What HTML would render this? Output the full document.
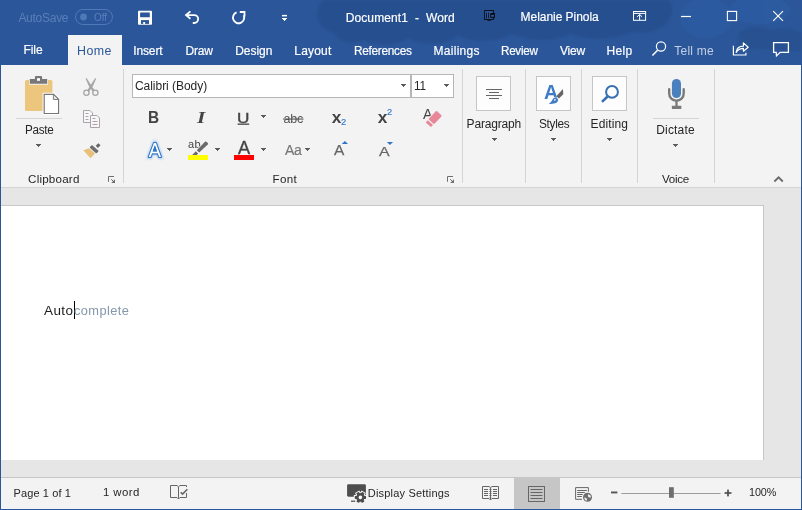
<!DOCTYPE html>
<html lang="en"><head><meta charset="utf-8"><title>Document1 - Word</title>
<style>
html,body{margin:0;padding:0}
body{width:802px;height:510px;overflow:hidden;position:relative;background:#2b579a;font-family:"Liberation Sans",sans-serif;font-size:12px}
#win{position:absolute;left:0;top:0;width:802px;height:510px;overflow:hidden}
.abs{position:absolute}
#titlebar{position:absolute;left:0;top:0;width:802px;height:65px;background:#2b579a;overflow:hidden}
#hometab{position:absolute;left:68px;top:35px;width:54px;height:31px;background:#f3f3f3}
#ribbon{position:absolute;left:1px;top:65px;width:800px;height:122px;background:#f3f3f3;border-bottom:1px solid #d4d4d4}
#docarea{position:absolute;left:1px;top:188px;width:800px;height:289px;background:#e6e6e6}
#page{position:absolute;left:0;top:17px;width:762px;height:254px;background:#fff;border-top:1px solid #c8c8c8;border-right:1px solid #c6c6c6}
#status{position:absolute;left:1px;top:477px;width:800px;height:31px;background:#f3f3f3;border-top:1px solid #c6c6c6}
.sep{position:absolute;top:4px;width:1px;height:114px;background:#d4d4d4}
.hline{position:absolute;height:1px;background:#d4d4d4}
.box{position:absolute;box-sizing:border-box;border:1px solid #c6c6c6;background:#fdfdfd}
.input{position:absolute;box-sizing:border-box;border:1px solid #b6b6b6;background:#fff}
.t{position:absolute;transform-origin:0 0;line-height:1;white-space:pre;margin:0;padding:0}
svg{position:absolute;overflow:visible}
.arr{position:absolute;width:5px;height:1px;background:#5c5c5c}
.arr::before{content:"";position:absolute;left:1px;top:1px;width:3px;height:1px;background:inherit}
.arr::after{content:"";position:absolute;left:2px;top:2px;width:1px;height:1px;background:inherit}
#labels{will-change:transform;position:absolute;left:0;top:0;width:802px;height:510px;pointer-events:none}

</style></head>
<body>
<div id="win">
<div id="titlebar">
  <svg width="802" height="65" style="left:0;top:0" viewBox="0 0 802 65">
    <defs><filter id="soft" x="-5%" y="-20%" width="110%" height="140%"><feGaussianBlur stdDeviation="1.2"/></filter></defs>
    <g fill="#27508f" filter="url(#soft)">
      <path d="M322 0C312 14 318 30 334 33C338 42 352 46 364 40C376 48 398 46 408 38C420 46 446 46 458 36C474 44 500 42 512 34C530 42 556 42 570 34C590 42 618 40 632 32C650 36 668 28 672 14C674 8 672 3 668 0Z"/>
      <path d="M738 34C744 26 760 24 770 30C782 26 796 28 802 34V52C780 50 756 48 738 50Z" opacity="0.8"/>
    </g>
    <g fill="#2e5da5" opacity="0.6">
      <ellipse cx="706" cy="18" rx="26" ry="20"/>
      <ellipse cx="760" cy="10" rx="30" ry="14"/>
    </g>
  </svg>
</div>
<div id="hometab"></div>
<div id="ribbon">
  <div class="hline" style="left:15px;top:53px;width:46px"></div>
  <div class="sep" style="left:122px"></div>
  <div class="input" style="left:131px;top:9px;width:279px;height:23.5px"></div>
  <div class="input" style="left:410px;top:9px;width:43px;height:23.5px"></div>
  <div class="sep" style="left:461px"></div>
  <div class="box" style="left:475px;top:11px;width:35px;height:35px"></div>
  <div class="sep" style="left:524px"></div>
  <div class="box" style="left:535px;top:11px;width:35px;height:35px"></div>
  <div class="sep" style="left:580px"></div>
  <div class="box" style="left:591px;top:11px;width:35px;height:35px"></div>
  <div class="sep" style="left:636px"></div>
  <div class="hline" style="left:652px;top:53px;width:46px"></div>
  <div class="sep" style="left:713px"></div>
</div>
<div id="docarea">
  <div id="page"></div>
  <div class="abs" style="left:72.5px;top:113px;width:1px;height:17.5px;background:#000"></div>
</div>
<div id="status">
  <div class="abs" style="left:513px;top:0;width:46px;height:31px;background:#c6c6c6"></div>
</div>

<div id="labels">
<span class="t" id="t-autosave" style="left:18.40px;top:12.00px;font-size:12px;color:#5a7fb8;letter-spacing:-0.271px;">AutoSave</span>
<span class="t" id="t-off" style="left:94.10px;top:13.00px;font-size:10px;color:#5a7fb8;letter-spacing:-0.112px;">Off</span>
<span class="t" id="t-title" style="left:345.70px;top:12.00px;font-size:12px;color:#fff;letter-spacing:0.113px;-webkit-text-stroke:0.18px #fff;">Document1&nbsp; -&nbsp; Word</span>
<span class="t" id="t-user" style="left:520.60px;top:11.00px;font-size:12px;color:#fff;letter-spacing:-0.042px;-webkit-text-stroke:0.18px #fff;">Melanie Pinola</span>
<span class="t" id="t-file" style="left:23.60px;top:44.00px;font-size:12px;color:#fff;letter-spacing:-0.117px;-webkit-text-stroke:0.18px #fff;">File</span>
<span class="t" id="t-home" style="left:77.17px;top:45.00px;font-size:12px;color:#2b579a;letter-spacing:0.400px;transform:scaleX(1.035);">Home</span>
<span class="t" id="t-insert" style="left:133.28px;top:45.00px;font-size:12px;color:#fff;letter-spacing:-0.135px;-webkit-text-stroke:0.18px #fff;">Insert</span>
<span class="t" id="t-draw" style="left:185.40px;top:45.00px;font-size:12px;color:#fff;letter-spacing:-0.167px;-webkit-text-stroke:0.18px #fff;">Draw</span>
<span class="t" id="t-design" style="left:235.20px;top:45.00px;font-size:12px;color:#fff;letter-spacing:-0.025px;-webkit-text-stroke:0.18px #fff;">Design</span>
<span class="t" id="t-layout" style="left:294.30px;top:45.00px;font-size:12px;color:#fff;letter-spacing:0.180px;-webkit-text-stroke:0.18px #fff;">Layout</span>
<span class="t" id="t-refs" style="left:353.51px;top:45.00px;font-size:12px;color:#fff;letter-spacing:-0.300px;transform:scaleX(0.986);-webkit-text-stroke:0.18px #fff;">References</span>
<span class="t" id="t-mail" style="left:433.40px;top:45.00px;font-size:12px;color:#fff;letter-spacing:0.311px;-webkit-text-stroke:0.18px #fff;">Mailings</span>
<span class="t" id="t-review" style="left:500.73px;top:45.00px;font-size:12px;color:#fff;letter-spacing:-0.300px;transform:scaleX(0.974);-webkit-text-stroke:0.18px #fff;">Review</span>
<span class="t" id="t-view" style="left:559.88px;top:45.00px;font-size:12px;color:#fff;letter-spacing:-0.183px;-webkit-text-stroke:0.18px #fff;">View</span>
<span class="t" id="t-help" style="left:606.40px;top:45.00px;font-size:12px;color:#fff;letter-spacing:0.400px;-webkit-text-stroke:0.18px #fff;">Help</span>
<span class="t" id="t-tellme" style="left:674.35px;top:45.00px;font-size:12px;color:#c2d0e7;letter-spacing:0.225px;">Tell me</span>
<span class="t" id="t-paste" style="left:24.73px;top:124.00px;font-size:12px;color:#262626;letter-spacing:-0.300px;transform:scaleX(0.974);">Paste</span>
<span class="t" id="t-clipboard" style="left:28.07px;top:173.00px;font-size:11.6px;color:#262626;letter-spacing:0.206px;">Clipboard</span>
<span class="t" id="t-calibri" style="left:134.97px;top:80.00px;font-size:12px;color:#262626;letter-spacing:-0.037px;">Calibri (Body)</span>
<span class="t" id="t-eleven" style="left:414.14px;top:80.00px;font-size:12px;color:#262626;letter-spacing:-0.300px;transform:scaleX(0.981);">11</span>
<span class="t" id="t-font" style="left:272.60px;top:173.00px;font-size:11.6px;color:#262626;letter-spacing:0.325px;">Font</span>
<span class="t" id="t-paragraph" style="left:466.60px;top:118.00px;font-size:12px;color:#262626;letter-spacing:-0.181px;">Paragraph</span>
<span class="t" id="t-styles" style="left:538.71px;top:118.00px;font-size:12px;color:#262626;letter-spacing:-0.300px;transform:scaleX(0.985);">Styles</span>
<span class="t" id="t-editing" style="left:590.60px;top:118.00px;font-size:12px;color:#262626;letter-spacing:0.117px;">Editing</span>
<span class="t" id="t-dictate" style="left:656.20px;top:124.00px;font-size:12px;color:#262626;letter-spacing:0.188px;">Dictate</span>
<span class="t" id="t-voice" style="left:661.98px;top:173.00px;font-size:11.6px;color:#262626;letter-spacing:-0.263px;">Voice</span>
<span class="t" id="t-auto" style="left:44.10px;top:305.00px;font-size:12.6px;color:#1a1a1a;letter-spacing:0.400px;transform:scaleX(1.069);">Auto</span>
<span class="t" id="t-complete" style="left:74.09px;top:305.00px;font-size:12.6px;color:#8497ab;letter-spacing:0.400px;transform:scaleX(1.018);">complete</span>
<span class="t" id="t-page" style="left:13.62px;top:488.00px;font-size:11px;color:#262626;letter-spacing:0.092px;">Page 1 of 1</span>
<span class="t" id="t-word" style="left:102.79px;top:487.00px;font-size:11px;color:#262626;letter-spacing:0.400px;transform:scaleX(1.036);">1 word</span>
<span class="t" id="t-display" style="left:367.82px;top:488.00px;font-size:11px;color:#262626;letter-spacing:0.192px;">Display Settings</span>
<span class="t" id="t-zoom" style="left:749.05px;top:487.00px;font-size:10.8px;color:#262626;letter-spacing:-0.100px;">100%</span>
<span class="t" id="t-B" style="left:148.33px;top:109.00px;font-size:16.2px;color:#444;transform:scaleX(0.952);font-weight:700;">B</span>
<span class="t" id="t-I" style="left:197.06px;top:110.00px;font-size:16.5px;color:#444;transform:scaleX(1.300);font-family:'Liberation Serif', serif;font-weight:700;font-style:italic;">I</span>
<span class="t" id="t-U" style="left:237.33px;top:110.00px;font-size:15.2px;color:#444;transform:scaleX(1.131);-webkit-text-stroke:0.4px #444;">U</span>
<span class="t" id="t-abc" style="left:283.50px;top:113.00px;font-size:12.5px;color:#555;letter-spacing:-0.188px;">abc</span>
<span class="t" id="t-xsub" style="left:331.78px;top:109.00px;font-size:17.3px;color:#444;font-weight:700;">x</span>
<span class="t" id="t-sub2" style="left:341.47px;top:119.00px;font-size:8.2px;color:#2e75c8;transform:scaleX(1.147);-webkit-text-stroke:0.12px #2e75c8;">2</span>
<span class="t" id="t-xsup" style="left:377.78px;top:109.00px;font-size:17.3px;color:#444;font-weight:700;">x</span>
<span class="t" id="t-sup2" style="left:387.27px;top:109.00px;font-size:8.2px;color:#2e75c8;transform:scaleX(1.147);-webkit-text-stroke:0.12px #2e75c8;">2</span>
<span class="t" id="t-clrA" style="left:423.28px;top:107.00px;font-size:14.6px;color:#444;transform:scaleX(0.968);">A</span>
<span class="t" id="t-hlab" style="left:188.39px;top:139.00px;font-size:10.8px;color:#444;letter-spacing:0.400px;transform:scaleX(1.026);">ab</span>
<span class="t" id="t-fcA" style="left:237.80px;top:140.00px;font-size:17.9px;color:#444;transform:scaleX(1.019);-webkit-text-stroke:0.35px #444;">A</span>
<span class="t" id="t-Aa" style="left:284.58px;top:143.00px;font-size:14.7px;color:#777;letter-spacing:-0.300px;transform:scaleX(0.956);-webkit-text-stroke:0.2px #777;">Aa</span>
<span class="t" id="t-growA" style="left:334.20px;top:143.00px;font-size:14.2px;color:#666;transform:scaleX(1.088);-webkit-text-stroke:0.25px #666;">A</span>
<span class="t" id="t-shrinkA" style="left:379.10px;top:145.00px;font-size:13.6px;color:#666;transform:scaleX(1.167);-webkit-text-stroke:0.25px #666;">A</span>
<span class="t" id="t-stylesA" style="left:543.62px;top:82.00px;font-size:20.3px;color:#3e7bc4;transform:scaleX(0.961);font-weight:700;">A</span>
</div>
<!-- all icons, absolute window coordinates -->
<svg id="icons" width="802" height="510" viewBox="0 0 802 510" style="left:0;top:0">
  <defs>
    <g id="arr"><path d="M0 0h5v1h-1v1h-1v1h-1v-1h-1v-1h-1z" shape-rendering="crispEdges"/></g>
    <filter id="glow" x="-40%" y="-40%" width="180%" height="180%"><feGaussianBlur stdDeviation="0.9"/></filter>
    <g id="launcher"><path d="M0.5 5.8V0.5H6" fill="none" stroke="#6e6e6e" stroke-width="1"/><path d="M7 3.2V7H3.2Z" fill="#6e6e6e"/><path d="M3.2 3.2L6 6" stroke="#6e6e6e" stroke-width="1" fill="none"/></g>
  </defs>

  <!-- TITLE BAR -->
  <rect x="75.5" y="9.5" width="37" height="15" rx="7.5" fill="none" stroke="#4f78b6"/>
  <circle cx="83.5" cy="17" r="3.4" fill="#4f78b6"/>
  <!-- save -->
  <g><rect x="138" y="10.8" width="14" height="14" rx="0.8" fill="#fffdf8"/><rect x="140.1" y="12.4" width="9.7" height="4.9" rx="0.6" fill="#2b579a"/><rect x="141" y="20.1" width="8" height="3.8" fill="#2b579a"/><rect x="143.2" y="22" width="1.9" height="2" fill="#fffdf8"/></g>
  <!-- undo -->
  <g fill="none" stroke="#fff" stroke-width="1.8"><path d="M190.4 11.4L186 15.1L190.4 18.8"/><path d="M186.4 15.1H194.2A3.95 3.95 0 0 1 194.2 23H192.8"/></g>
  <!-- repeat -->
  <g fill="none" stroke="#fff" stroke-width="1.8"><path d="M236.6 12.4A5.6 5.6 0 1 0 243.7 15.4"/><path d="M239.8 12H244.5V16.6"/></g>
  <!-- customize qat -->
  <rect x="282" y="14.9" width="5" height="1.5" fill="#fff"/>
  <use href="#arr" x="282" y="18" fill="#fff"/>
  <!-- dark monitor -->
  <g><rect x="484.6" y="10.6" width="8.8" height="8.8" fill="#2d5ba2" stroke="#0a0e18" stroke-width="1"/><path d="M486.5 12.7v5.5M488.6 12.7v5.5" stroke="#0a0e18" stroke-width="0.9"/><rect x="490.2" y="13" width="4.8" height="4.9" fill="#0a0e18"/><rect x="491.2" y="14.9" width="2.7" height="1.8" fill="#2d5ba2"/><rect x="487.3" y="19.8" width="3.6" height="0.9" fill="#0a0e18"/></g>
  <!-- ribbon display -->
  <g fill="none" stroke="#fff" stroke-width="1"><rect x="633.5" y="11.5" width="12.1" height="8.8"/><path d="M633.5 13.4h12"/><path d="M639.6 20V14.8M637.1 16.8L639.6 14.4L642.1 16.8"/></g>
  <rect x="681" y="15.9" width="10" height="1.2" fill="#fff"/>
  <rect x="727.4" y="11.4" width="9.2" height="9.2" fill="none" stroke="#fff" stroke-width="1.1"/>
  <path d="M773.2 11.1L783 20.9M783 11.1L773.2 20.9" stroke="#fff" stroke-width="1.1"/>
  <!-- TAB ROW -->
  <circle cx="661" cy="46.5" r="4.6" fill="none" stroke="#fff" stroke-width="1.2"/><path d="M657.6 50.2L652.4 55.6" stroke="#fff" stroke-width="1.5"/>
  <g fill="none" stroke="#fff" stroke-width="1.2"><path d="M733.4 45.8V55H745.9V52.8"/><path d="M736.2 52.4C736.6 48.4 739.6 46.2 743.4 46.2V42.9L748.2 47.2L743.4 51.2V48.4C740.4 48.4 738 49.6 736.2 52.4Z" stroke-linejoin="round"/></g>
  <path d="M773.6 42.7H788.4V52.4H780.2L776.5 55.9L776.2 52.4H773.6Z" fill="none" stroke="#fff" stroke-width="1.3"/>

  <!-- CLIPBOARD -->
  <rect x="25" y="80" width="27.4" height="31" rx="1.6" fill="#ecc67c"/>
  <path d="M29 84.8V78.2H34V76.6Q34 75.2 35.4 75.2H41.6Q43 75.2 43 76.6V78.2H48V84.8Z" fill="#f3f3f3"/>
  <path d="M29.8 83.8V79H34.9V77.2Q34.9 76.1 36 76.1H41Q42.1 76.1 42.1 77.2V79H47.2V83.8Z" fill="#787878"/>
  <rect x="37" y="78.2" width="3" height="2.6" fill="#fff"/>
  <path d="M42.6 92.7H54.2L60.2 98.7V115.1H42.6Z" fill="#fff"/>
  <path d="M44.2 94.3H53.6L58.6 99.3V113.5H44.2Z" fill="#fff" stroke="#777" stroke-width="1.2"/>
  <path d="M53.4 94.4V99.5H58.5Z" fill="#e4e4e4" stroke="#777" stroke-width="0.9"/>
  <use href="#arr" x="36" y="144" fill="#5c5c5c"/>
  <!-- scissors -->
  <g fill="#a6a6a6"><path d="M85.5 78.3L86.7 78.3L94.5 90.2L92.6 91.4L88.6 85.6Z"/><path d="M96.3 78.3L95.1 78.3L87.3 90.2L89.2 91.4L93.2 85.6Z"/></g>
  <g fill="none" stroke="#a6a6a6" stroke-width="1.3"><circle cx="86.4" cy="92.7" r="2.6"/><circle cx="95.4" cy="92.7" r="2.6"/></g>
  <!-- copy -->
  <g fill="#f7f7f7" stroke="#aaa4aa" stroke-width="1"><path d="M83.5 110.5H90L92.5 113V122.5H83.5Z"/><path d="M90.5 115.5H97L99.5 118V127.5H90.5Z"/></g>
  <g stroke="#aaa4aa" stroke-width="1"><path d="M85.5 113.5h3M85.5 116.5h3M85.5 119.5h3M92.5 118.5h3M92.5 121.5h5M92.5 124.5h5"/></g>
  <!-- format painter -->
  <path d="M98.4 143.2L100.5 145.3L97.9 147.9L95.7 145.8Z" fill="#666"/>
  <path d="M91.4 145.4Q92 144.9 92.6 145.4L98.2 150.6Q98.7 151.2 98.2 151.8L96.8 153.1Q96.2 153.5 95.7 153L90.1 147.9Q89.6 147.3 90.1 146.7Z" fill="#6e6e6e"/>
  <path d="M89 148.2L95 153.4L90.4 158.3L83.4 150.3Z" fill="#e8c07a"/>
  <use href="#launcher" x="108" y="176"/>

  <!-- FONT -->
  <use href="#arr" x="401" y="84" fill="#5c5c5c"/>
  <use href="#arr" x="444" y="84" fill="#5c5c5c"/>
  <rect x="237.6" y="123.5" width="11.6" height="1.3" fill="#444"/>
  <use href="#arr" x="261" y="115" fill="#5c5c5c"/>
  <rect x="283.1" y="118.5" width="20.4" height="1.1" fill="#555"/>
  <!-- clear formatting eraser -->
  <g><path d="M435.6 111.4Q436.5 110.6 437.4 111.4L441.2 114.9Q442 115.8 441.2 116.7L434.8 123.5Q434 124.3 433.1 123.5L429.3 120Q428.5 119.2 429.3 118.3Z" fill="#f3f3f3" stroke="#f3f3f3" stroke-width="2"/><path d="M435.6 111.4Q436.5 110.6 437.4 111.4L441.2 114.9Q442 115.8 441.2 116.7L434.8 123.5Q434 124.3 433.1 123.5L429.3 120Q428.5 119.2 429.3 118.3Z" fill="#e8879a"/><path d="M427.8 120.2L433 124.9L431.6 126.5Q431 127.1 430.3 126.5L426.3 122.9Q425.7 122.3 426.3 121.7Z" fill="#e8879a"/></g>
  <!-- text effects A -->
  <g transform="translate(148.7,157) scale(0.93,0.985)" font-family="'Liberation Sans',sans-serif" font-size="19.8">
    <text x="0" y="0" fill="#a5c9f1" stroke="#a5c9f1" stroke-width="3.6" filter="url(#glow)">A</text>
    <text x="0" y="0" fill="#fff" stroke="#2e75c8" stroke-width="2.2" paint-order="stroke" stroke-linejoin="round">A</text>
    <path d="M5.1 -6.6L6.6 -10.6L8.1 -6.6Z" fill="#2e75c8" stroke="#2e75c8" stroke-width="0.8"/>
  </g>
  <use href="#arr" x="167" y="148" fill="#5c5c5c"/>
  <!-- highlight -->
  <rect x="188" y="155" width="20" height="5" fill="#ffff00"/>
  <path d="M205.2 141.6Q206 141.2 206.7 141.9L207.8 143Q208.4 143.8 207.8 144.5L199.2 152.6L196.8 150.3Z" fill="#f3f3f3" stroke="#f3f3f3" stroke-width="1.6"/>
  <path d="M205.2 141.6Q206 141.2 206.7 141.9L207.8 143Q208.4 143.8 207.8 144.5L199.2 152.6L196.8 150.3Z" fill="#6a6a6a"/>
  <path d="M195.8 151.3L198.1 153.5L196.8 154.9H192.2Z" fill="#6a6a6a"/>
  <use href="#arr" x="215" y="148" fill="#5c5c5c"/>
  <rect x="234" y="155" width="20" height="5" fill="#ff0000"/>
  <use href="#arr" x="261" y="148" fill="#5c5c5c"/>
  <use href="#arr" x="305" y="148" fill="#5c5c5c"/>
  <path d="M341.8 144L344.9 140.9L348 144Z" fill="#2e75c8"/>
  <path d="M386.9 141.9H393L389.95 144.9Z" fill="#2e75c8"/>
  <use href="#launcher" x="447" y="176"/>

  <!-- PARAGRAPH -->
  <path d="M486 89.5h16M489 92.5h10M486 95.5h16M489 98.5h10" stroke="#666" stroke-width="1"/>
  <use href="#arr" x="492" y="138" fill="#5c5c5c"/>
  <!-- STYLES -->
  <path d="M562.9 89L563.3 94.3L558.9 98.5L556.3 96.2Z" fill="#666"/>
  <path d="M555.7 97.3L558.1 99.5Q558.1 102.8 554 103.6Q551 104.2 548.8 103.8Q551.2 102.4 552 100.4Q553 97.6 555.7 97.3Z" fill="#3e7bc4" stroke="#fcfcfc" stroke-width="1" paint-order="stroke"/>
  <ellipse cx="554.9" cy="99.9" rx="1" ry="0.7" fill="#fcfcfc" transform="rotate(-40 554.9 99.9)"/>
  <use href="#arr" x="551" y="138" fill="#5c5c5c"/>
  <!-- EDITING -->
  <circle cx="612" cy="91.9" r="5.9" fill="none" stroke="#3670b3" stroke-width="2"/>
  <path d="M607.6 96.5L602 101.8" stroke="#3670b3" stroke-width="2.5"/>
  <use href="#arr" x="607" y="138" fill="#5c5c5c"/>
  <!-- DICTATE -->
  <rect x="671.9" y="78.9" width="9.1" height="19.1" rx="4.55" fill="#4a80bd"/>
  <path d="M669.2 89.2V93.4A7.25 7.25 0 0 0 683.7 93.4V89.2" fill="none" stroke="#7a7a7a" stroke-width="2.4" stroke-linecap="round"/>
  <path d="M676.5 101V106.5" stroke="#7a7a7a" stroke-width="2.3"/>
  <rect x="671.9" y="105.8" width="9.4" height="3.2" rx="0.5" fill="#7a7a7a"/>
  <use href="#arr" x="673" y="144" fill="#5c5c5c"/>
  <path d="M774.4 181.5L778.6 177.3L782.8 181.5" fill="none" stroke="#6a6a6a" stroke-width="1.8"/>

  <!-- STATUS BAR -->
  <g fill="none" stroke="#666" stroke-width="1"><path d="M177 485.5H170.5V497.5H177L178.5 499L180 497.5H186.5V493M186.5 487V485.5H180L178.5 486.8L177 485.5M178.5 486.8V499"/><path d="M180.7 492.2L182.5 494L187.4 489.2" stroke-width="1.6"/></g>
  <!-- display settings -->
  <rect x="347.1" y="484.2" width="18.8" height="12.5" rx="1.4" fill="#4d4d4d"/>
  <rect x="351" y="500.6" width="4.6" height="1.2" fill="#4d4d4d"/>
  <g transform="translate(360.4,497.4) rotate(30)"><g fill="#f3f3f3" stroke="#f3f3f3" stroke-width="2"><circle r="4.1"/><rect x="-1.5" y="-5.6" width="3" height="11.2"/><rect x="-1.5" y="-5.6" width="3" height="11.2" transform="rotate(60)"/><rect x="-1.5" y="-5.6" width="3" height="11.2" transform="rotate(120)"/></g><g fill="#4d4d4d"><circle r="4.1"/><rect x="-1.5" y="-5.6" width="3" height="11.2" rx="0.4"/><rect x="-1.5" y="-5.6" width="3" height="11.2" rx="0.4" transform="rotate(60)"/><rect x="-1.5" y="-5.6" width="3" height="11.2" rx="0.4" transform="rotate(120)"/></g><circle r="1.8" fill="#fff"/></g>
  <!-- read mode -->
  <g fill="none" stroke="#666" stroke-width="1"><path d="M489 486.5H482.5V498.5H489L490.5 500L492 498.5H498.5V486.5H492L490.5 487.6L489 486.5M490.5 487.6V500"/><path d="M484 489.5h4M484 491.5h4M484 493.5h4M484 495.5h4M493 489.5h4M493 491.5h4M493 493.5h4M493 495.5h4"/><path d="M489.3 489.5h2.4M489.3 491.5h2.4M489.3 493.5h2.4M489.3 495.5h2.4M489.6 497.5h1.8" stroke-width="0.8"/></g>
  <!-- print layout -->
  <g fill="none" stroke="#666" stroke-width="1"><rect x="528.5" y="486.5" width="16" height="15"/><path d="M530.5 489.5h12M530.5 492.5h12M530.5 495.5h12M530.5 498.5h12"/></g>
  <!-- web layout -->
  <g fill="none" stroke="#666" stroke-width="1"><path d="M582 499.3H575.6V487.6H588.4V491.8"/><path d="M577.2 490.5h9.7M577.2 492.5h7.8M577.2 494.5h5.6M577.2 496.5h4.7"/></g>
  <circle cx="587.5" cy="497.2" r="5.4" fill="#f3f3f3"/><circle cx="587.5" cy="497.2" r="4.5" fill="#6e6e6e"/>
  <path d="M588.2 494.2Q590.6 494.4 591 497Q589.8 498 588.6 497.2Q587.2 496 588.2 494.2Z" fill="#f0f0f0"/>
  <path d="M584.2 497.6Q585.8 497.4 586.8 498.8Q587.4 500.2 586.4 500.8Q584.4 500 584.2 497.6Z" fill="#f0f0f0"/>
  <!-- zoom slider -->
  <rect x="611" y="491.5" width="6.4" height="1.9" fill="#555"/>
  <rect x="621.4" y="493" width="99.2" height="1" fill="#9c9c9c"/>
  <rect x="669" y="487.2" width="4.8" height="10.6" fill="#6e6e6e"/>
  <rect x="724.6" y="492.1" width="6.8" height="1.8" fill="#555"/>
  <rect x="727.1" y="489.6" width="1.8" height="6.8" fill="#555"/>
</svg>
</div>

</body></html>
